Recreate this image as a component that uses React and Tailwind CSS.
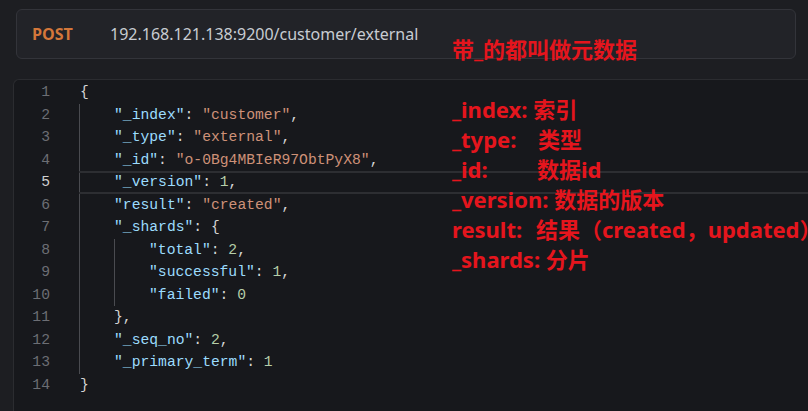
import React from "react";

const K = (t) => ({ t, c: "text-[#9cdcfe]" });
const S = (t) => ({ t, c: "text-[#ce9178]" });
const N = (t) => ({ t, c: "text-[#b5cea8]" });
const P = (t) => ({ t, c: "text-[#d4d4d4]" });

const lines = [
  { i: 0, toks: [P("{")] },
  { i: 1, toks: [K('"_index"'), P(": "), S('"customer"'), P(",")] },
  { i: 1, toks: [K('"_type"'), P(": "), S('"external"'), P(",")] },
  { i: 1, toks: [K('"_id"'), P(": "), S('"o-0Bg4MBIeR97ObtPyX8"'), P(",")] },
  { i: 1, toks: [K('"_version"'), P(": "), N("1"), P(",")], active: true },
  { i: 1, toks: [K('"result"'), P(": "), S('"created"'), P(",")] },
  { i: 1, toks: [K('"_shards"'), P(": {")] },
  { i: 2, toks: [K('"total"'), P(": "), N("2"), P(",")] },
  { i: 2, toks: [K('"successful"'), P(": "), N("1"), P(",")] },
  { i: 2, toks: [K('"failed"'), P(": "), N("0")] },
  { i: 1, toks: [P("},")] },
  { i: 1, toks: [K('"_seq_no"'), P(": "), N("2"), P(",")] },
  { i: 1, toks: [K('"_primary_term"'), P(": "), N("1")] },
  { i: 0, toks: [P("}")] },
];

const mono = { fontFamily: '"Liberation Mono", "DejaVu Sans Mono", monospace' };

export default function App() {
  return (
    <div className="relative w-[808px] h-[411px] overflow-hidden bg-[#1d1e22] flex flex-col">
      <div className="pt-[9px] pl-[16px] pr-[12px]">
        <div className="h-[50px] rounded-[6px] border border-[#33343a] bg-[#222328] flex items-center pl-[15px]">
          <span
            className="text-[16px] font-bold text-[#d4773a] w-[78px]"
            style={{ fontFamily: '"Open Sans", "Noto Sans", sans-serif' }}
          >
            POST
          </span>
          <span
            className="text-[16px] text-[#c8ccd2]"
            style={{ fontFamily: '"Noto Sans", "Open Sans", sans-serif' }}
          >
            192.168.121.138:9200/customer/external
          </span>
        </div>
      </div>

      <div className="mt-[20px] ml-[13px] flex-1 border-l border-t border-[#2b2c30] rounded-tl-[6px] bg-[#17181c] flex pt-[1px] text-[14.7px]" style={mono}>
        <div className="w-[65px] pr-[29px] text-right">
          {lines.map((l, idx) => (
            <div
              key={idx}
              className={`h-[22.5px] leading-[22.5px] ${l.active ? "text-[#d0d0d0]" : "text-[#6c6e74]"}`}
            >
              {idx + 1}
            </div>
          ))}
        </div>
        <div className="flex-1">
          {lines.map((l, idx) => (
            <div
              key={idx}
              className="relative h-[22.5px] leading-[22.5px] flex whitespace-pre"
            >
              {l.active && (
                <div className="absolute left-0 right-0 top-0 bottom-0 border-y-2 border-[#2d2e32] pointer-events-none" />
              )}
              {Array.from({ length: l.i }).map((_, j) => (
                <span key={j} className="inline-block w-[35px] h-full border-l border-[#4a4b50]" />
              ))}
              <span className={l.i === 0 ? "pl-[1px]" : ""}>
                {l.toks.map((t, j) => (
                  <span key={j} className={t.c}>
                    {t.t}
                  </span>
                ))}
              </span>
            </div>
          ))}
        </div>
      </div>

      <div
        className="absolute left-[452px] top-[34px] text-[22px] leading-[30px] font-bold text-[#e5151d] whitespace-nowrap"
        style={{ fontFamily: '"Noto Sans", "Noto Sans CJK SC", sans-serif' }}
      >
        <div>带_的都叫做元数据</div>
        <div>&nbsp;</div>
        <div>_index: 索引</div>
        <div>
          <span className="inline-block w-[86px]">_type:</span>类型
        </div>
        <div>
          <span className="inline-block w-[85px]">_id:</span>数据id
        </div>
        <div>_version: 数据的版本</div>
        <div>
          <span className="inline-block w-[84px]">result:</span>结果（created，updated）
        </div>
        <div>_shards: 分片</div>
      </div>
    </div>
  );
}
